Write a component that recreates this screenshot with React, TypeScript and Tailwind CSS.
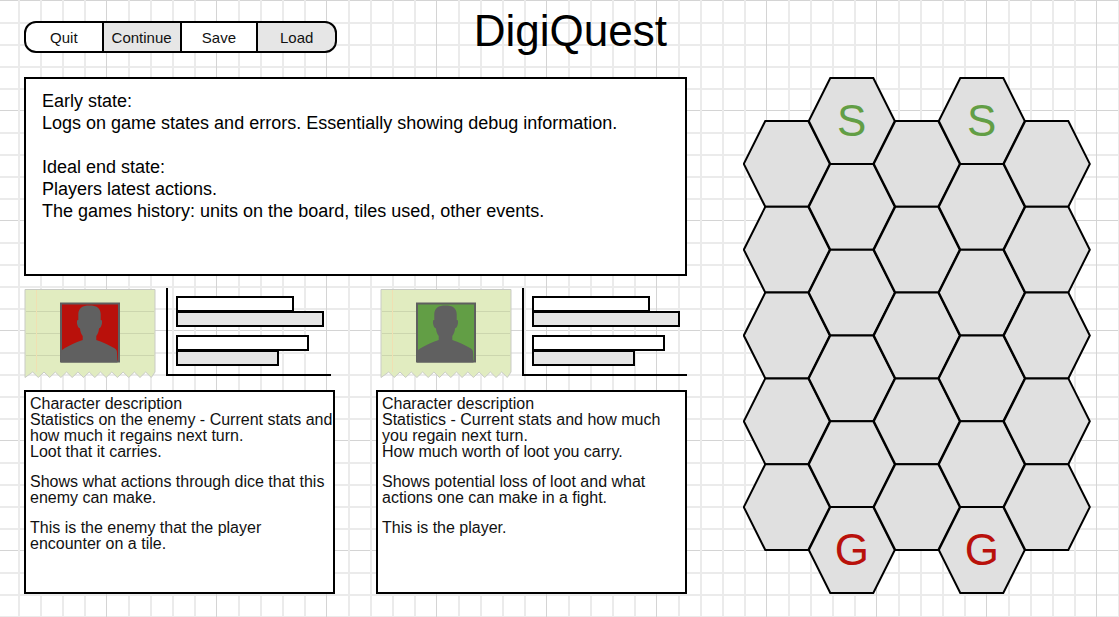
const menu = [
  { label: "Quit", shade: "bg-white", width: "flex-[78]" },
  { label: "Continue", shade: "bg-[#e6e6e6]", width: "flex-[78]" },
  { label: "Save", shade: "bg-white", width: "flex-[77]" },
  { label: "Load", shade: "bg-[#e6e6e6]", width: "flex-[79]" },
];

const stats = [
  { width: "w-[118px]", fill: "bg-white", gap: "" },
  { width: "w-[148px]", fill: "bg-[#e5e5e5]", gap: "-mt-px" },
  { width: "w-[133px]", fill: "bg-white", gap: "mt-2" },
  { width: "w-[103px]", fill: "bg-[#e5e5e5]", gap: "-mt-px" },
];

const ROW_PITCH = 85.8;
const COLUMN_PITCH = 65;
const columns: string[][] = [
  ["", "", "", "", ""],
  ["S", "", "", "", "", "G"],
  ["", "", "", "", ""],
  ["S", "", "", "", "", "G"],
  ["", "", "", "", ""],
];

function MenuBar() {
  return (
    <nav className="mt-[21px] flex h-8 w-[313px] gap-[2px] overflow-hidden rounded-[12px] border-2 border-black bg-black">
      {menu.map((item) => (
        <button
          key={item.label}
          type="button"
          className={`${item.width} ${item.shade} pt-[2px] text-center text-[15px] leading-[26px] text-[#111]`}
        >
          {item.label}
        </button>
      ))}
    </nav>
  );
}

function Portrait({ color }: { color: string }) {
  const tornEdge = Array.from({ length: 11 }, (_, i) => {
    const x = 8.7 + i * 11.3;
    return `L${x} 84L${x + 5.6} 89.5`;
  }).join("");
  return (
    <svg className="h-[90px] w-[132px] shrink-0" viewBox="0 0 132 90" aria-hidden="true">
      <path d={`M131 1.500H1V89.500${tornEdge}L131 84Z`} fill="#e1ecc0" stroke="#c9cbc5" />
      <path d="M2 23.500H130M2 45.500H130M2 67.500H130" stroke="#ccd6ae" />
      <path d="M12.500 2V84" stroke="#f0e0b2" />
      <rect x="37" y="15.500" width="58" height="58" fill={color} stroke="#5f5f5f" strokeWidth="2" />
      <path
        d="M37 74.500V65C37 62.500 38.500 61.500 40.500 60.300C46 57 52 54 58.700 52V48C57.300 46 56.200 43.500 56 40.500C53.900 40 52.300 35 53.200 32.500C53.500 31.800 54.300 32 54.300 32V26C54.500 20 58.500 17.500 65.500 17.500C72.500 17.500 76.500 20 76.700 26V32C76.700 32 77.500 31.800 77.800 32.500C78.700 35 77.100 40 75 40.500C74.800 43.500 73.700 46 72.300 48V52C79 54 85 57 90.500 60.300C92.500 61.500 93 63 93 65L93.500 74.500Z"
        fill="#606060"
      />
    </svg>
  );
}

type CharacterProps = { color: string; align: string; paragraphs: string[] };

function Character({ color, align, paragraphs }: CharacterProps) {
  return (
    <section className="w-[311px]">
      <div className={`flex ${align}`}>
        <Portrait color={color} />
        <div className="ml-[10px] h-[88px] w-[165px] border-b-2 border-l-2 border-black pt-2 pl-2">
          {stats.map((bar, i) => (
            <div key={i} className={`h-4 border-2 border-black ${bar.width} ${bar.fill} ${bar.gap}`} />
          ))}
        </div>
      </div>
      <div className="mt-3 flex min-h-[204px] flex-col gap-[14px] border-2 border-black bg-white pt-1 pl-1 text-[16px] leading-4 text-[#111]">
        {paragraphs.map((text) => (
          <p key={text} className="whitespace-pre-line">
            {text}
          </p>
        ))}
      </div>
    </section>
  );
}

function Board() {
  return (
    <svg className="h-[519px] w-[350px]" viewBox="0 0 350 519" role="img" aria-label="Board">
      {columns.map((tiles, c) =>
        tiles.map((mark, r) => {
          const x = 43.8 + c * COLUMN_PITCH;
          const y = (c % 2 ? 44 : 86.9) + r * ROW_PITCH;
          return (
            <g key={`${c}-${r}`}>
              <path
                d={`M${x - 43} ${y}l21.500 -42.900h43l21.500 42.900l-21.500 42.900h-43z`}
                fill="#e0e0e0"
                stroke="#000"
                strokeWidth="2"
              />
              {mark && (
                <text
                  x={x}
                  y={y + 15}
                  textAnchor="middle"
                  className={`text-[44px] ${mark === "S" ? "fill-[#629e45]" : "fill-[#b9110b]"}`}
                >
                  {mark}
                </text>
              )}
            </g>
          );
        }),
      )}
    </svg>
  );
}

export default function App() {
  return (
    <main className="flex min-h-screen justify-between bg-white bg-[linear-gradient(to_right,#d4d4d4_1px,transparent_1px_22px,#ebebeb_22px_24px,transparent_24px_44px,#ebebeb_44px_46px,transparent_46px_66px,#ebebeb_66px_68px,transparent_68px_88px,#ebebeb_88px_90px,transparent_90px),linear-gradient(to_bottom,#d4d4d4_1px,transparent_1px_22px,#ebebeb_22px_24px,transparent_24px_44px,#ebebeb_44px_46px,transparent_46px_66px,#ebebeb_66px_68px,transparent_68px_88px,#ebebeb_88px_90px,transparent_90px)] bg-[size:110px_110px] bg-[position:106px_0] pr-[26px] pl-6 font-['Liberation_Sans',Arial,sans-serif]">
      <div className="w-[663px]">
        <header className="flex h-[77px] justify-between pr-5">
          <MenuBar />
          <h1 className="pt-[6px] text-[44px] leading-[50px] text-black">DigiQuest</h1>
        </header>
        <p className="min-h-[199px] whitespace-pre-line border-2 border-black bg-white px-4 pt-[11px] text-[18px] leading-[22px] text-black">
          {"Early state:\nLogs on game states and errors. Essentially showing debug information.\n\nIdeal end state:\nPlayers latest actions.\nThe games history: units on the board, tiles used, other events."}
        </p>
        <div className="mt-3 flex justify-between">
          <Character
            align="justify-start"
            color="#b9110b"
            paragraphs={[
              "Character description\nStatistics on the enemy - Current stats and how much it regains next turn.\nLoot that it carries.",
              "Shows what actions through dice that this enemy can make.",
              "This is the enemy that the player encounter on a tile.",
            ]}
          />
          <Character
            align="justify-end"
            color="#629e45"
            paragraphs={[
              "Character description\nStatistics - Current stats and how much you regain next turn.\nHow much worth of loot you carry.",
              "Shows potential loss of loot and what actions one can make in a fight.",
              "This is the player.",
            ]}
          />
        </div>
      </div>
      <div className="pt-[77px]">
        <Board />
      </div>
    </main>
  );
}
